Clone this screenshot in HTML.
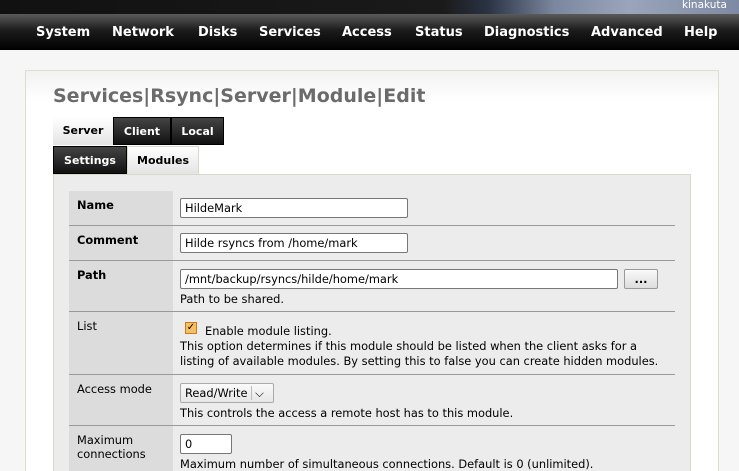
<!DOCTYPE html>
<html><head><style>
*{margin:0;padding:0;box-sizing:border-box}
html,body{width:739px;height:471px;overflow:hidden}
body{background:#f6f6f6;font-family:"DejaVu Sans",sans-serif;font-size:11.4px;color:#000;position:relative}
.top{position:absolute;left:0;top:0;width:739px;height:14px;background:linear-gradient(90deg,#111 0,#1a1a1a 60%,#2a3344 66%,#7b879e 75%,#9aa5bb 85%,#7e8aa3 100%)}
.top span{position:absolute;right:12px;top:-1px;color:#fff;font-size:10.5px}
.nav{position:absolute;left:0;top:14px;width:739px;height:36px;background:linear-gradient(#5a5a5a,#1c1c1c 45%,#000)}
.nav b{position:absolute;top:11px;color:#fff;font-size:13px;font-weight:bold}
.panel{position:absolute;left:25px;top:70px;width:694px;height:420px;border:1px solid #dedbd0;background:linear-gradient(#f2f2f2,#fff 30px)}
h1{position:absolute;left:53px;top:85px;font-size:19px;color:#6b6b6b;font-weight:bold}
.tab{position:absolute;height:28px;font-weight:bold;font-size:11px;line-height:28px;text-align:center}
.d{background:linear-gradient(#444,#111);color:#fff;border:1px solid #000}
.w{background:linear-gradient(#fff,#e4e4e4);color:#000}
.area{position:absolute;left:53px;top:174px;width:638px;height:300px;background:#ececec;border:1px solid #d8d8cc}
.row{position:absolute;left:69px;width:606px;border-bottom:1px solid #999}
.lab{position:absolute;left:0;top:0;bottom:0;width:104px;background:#dcdcdc;padding:7px 8px}
.inp{position:absolute;background:#fff;border:1px solid #777;border-radius:2px;height:20px;font-size:11.4px;padding:2px 4px;line-height:14px;white-space:nowrap}
.t{position:absolute;left:111px;white-space:nowrap}
</style></head><body>
<div class="top"><span>kinakuta</span></div>
<div class="nav"><b style="left:36px">System</b><b style="left:112px">Network</b><b style="left:198px">Disks</b><b style="left:259px">Services</b><b style="left:342px">Access</b><b style="left:415px">Status</b><b style="left:484px">Diagnostics</b><b style="left:591px">Advanced</b><b style="left:684px">Help</b></div>
<div class="panel"></div>
<h1>Services|Rsync|Server|Module|Edit</h1>
<div class="tab w" style="left:53px;top:117px;width:60px">Server</div>
<div class="tab d" style="left:113px;top:117px;width:58px">Client</div>
<div class="tab d" style="left:171px;top:117px;width:53px">Local</div>
<div class="tab d" style="left:53px;top:146px;width:74px">Settings</div>
<div class="tab w" style="left:127px;top:146px;width:72px;border:1px solid #d8d8cc;border-bottom:none">Modules</div>
<div class="area"></div>
<div class="row" style="top:191px;height:35px"><div class="lab"><b>Name</b></div><div class="inp" style="left:111px;top:7px;width:228px">HildeMark</div></div>
<div class="row" style="top:226px;height:35px"><div class="lab"><b>Comment</b></div><div class="inp" style="left:111px;top:7px;width:228px">Hilde rsyncs from /home/mark</div></div>
<div class="row" style="top:261px;height:51px"><div class="lab"><b>Path</b></div><div class="inp" style="left:111px;top:8px;width:438px">/mnt/backup/rsyncs/hilde/home/mark</div><div class="inp" style="left:555px;top:8px;width:34px;text-align:center;background:linear-gradient(#fafafa,#ddd);border-color:#999;font-weight:bold">...</div><div class="t" style="top:31px">Path to be shared.</div></div>
<div class="row" style="top:312px;height:63px"><div class="lab">List</div><div style="position:absolute;left:116px;top:10px;width:12px;height:12px;border:1px solid #c87a20;background:#f4c060;font-size:10px;line-height:10px;text-align:center;font-weight:bold">✓</div><div class="t" style="top:12px;left:136px">Enable module listing.</div><div class="t" style="top:27px">This option determines if this module should be listed when the client asks for a</div><div class="t" style="top:42px">listing of available modules. By setting this to false you can create hidden modules.</div></div>
<div class="row" style="top:375px;height:51px"><div class="lab">Access mode</div><div class="inp" style="left:111px;top:8px;width:94px;background:linear-gradient(#fafafa,#e6e6e6);border-color:#aaa">Read/Write <span style="border-left:1px solid #bbb;padding-left:3px">⌵</span></div><div class="t" style="top:31px">This controls the access a remote host has to this module.</div></div>
<div class="row" style="top:426px;height:51px;border:none"><div class="lab">Maximum<br>connections</div><div class="inp" style="left:111px;top:8px;width:52px">0</div><div class="t" style="top:31px">Maximum number of simultaneous connections. Default is 0 (unlimited).</div></div>
</body></html>
